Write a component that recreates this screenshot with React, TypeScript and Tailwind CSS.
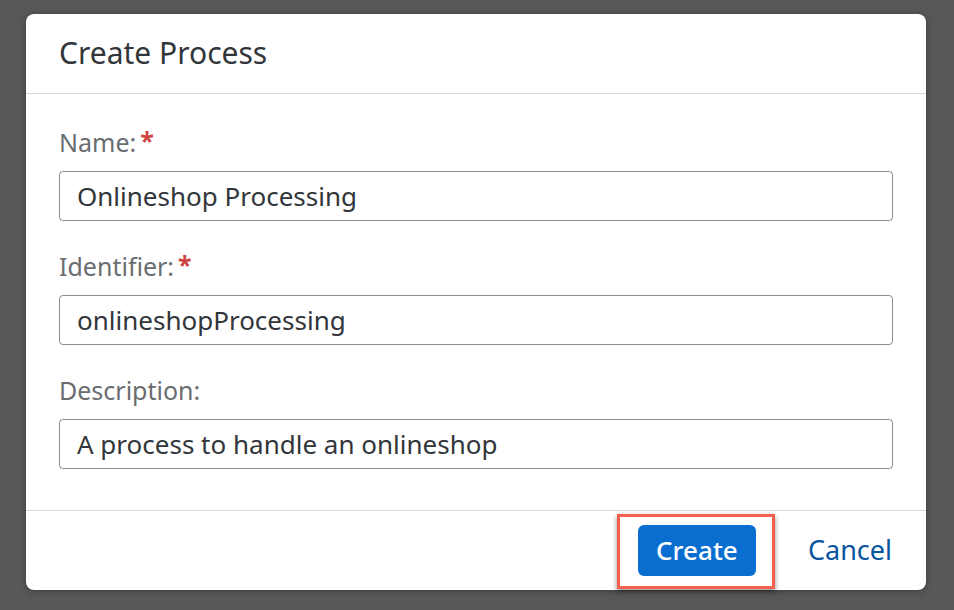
const FONT = "font-['Noto_Sans',_'Liberation_Sans',_sans-serif]";

type FieldProps = {
    label: string;
    value: string;
    required?: boolean;
    first?: boolean;
};

const Field = ({ label, value, required, first }: FieldProps) => {
    return (
        <div className={first ? "" : "mt-[29px]"}>
            <div className="flex h-[32px] items-center text-[25px] leading-none text-[#6a6d70]">
                <span>{label}</span>
                {required && (
                    <span className="ml-[4px] -mt-[4px] font-bold text-[#d04343]">
                        *
                    </span>
                )}
            </div>
            <div className="mt-[13px] flex h-[50px] items-center rounded-[4px] border border-[#89919a] bg-white px-[17px] text-[26px] text-[#32363a]">
                {value}
            </div>
        </div>
    );
};

const App = () => {
    return (
        <div className={`${FONT} h-[610px] w-[954px] bg-[#585858] pl-[26px] pt-[14px]`}>
            <div className="flex h-[576px] w-[900px] flex-col rounded-[8px] bg-white shadow-[0_1px_6px_rgba(0,0,0,0.35)]">
                {/* header */}
                <div className="flex h-[80px] items-center border-b border-[#d9d9d9] pl-[33px] pb-[2px]">
                    <h1 className="text-[30px] text-[#32363a]">Create Process</h1>
                </div>

                {/* body */}
                <div className="flex-1 px-[33px] pt-[32px]">
                    <Field label="Name:" value="Onlineshop Processing" required first />
                    <Field label="Identifier:" value="onlineshopProcessing" required />
                    <Field label="Description:" value="A process to handle an onlineshop" />
                </div>

                {/* footer */}
                <div className="flex h-[80px] items-center justify-end border-t border-[#d9d9d9] pr-[34px]">
                    <div className="relative">
                        <button className="h-[51px] w-[118px] rounded-[6px] bg-[#0a6ed1] text-[26px] font-medium text-white">
                            Create
                        </button>
                        <span className="pointer-events-none absolute -top-[11px] -bottom-[13px] -left-[21px] -right-[19px] border-[3px] border-[#f5614f] shadow-[0_2px_5px_rgba(0,0,0,0.45)]" />
                    </div>
                    <button className="ml-[52px] text-[27px] text-[#0854a0]">
                        Cancel
                    </button>
                </div>
            </div>
        </div>
    );
};

export default App;
